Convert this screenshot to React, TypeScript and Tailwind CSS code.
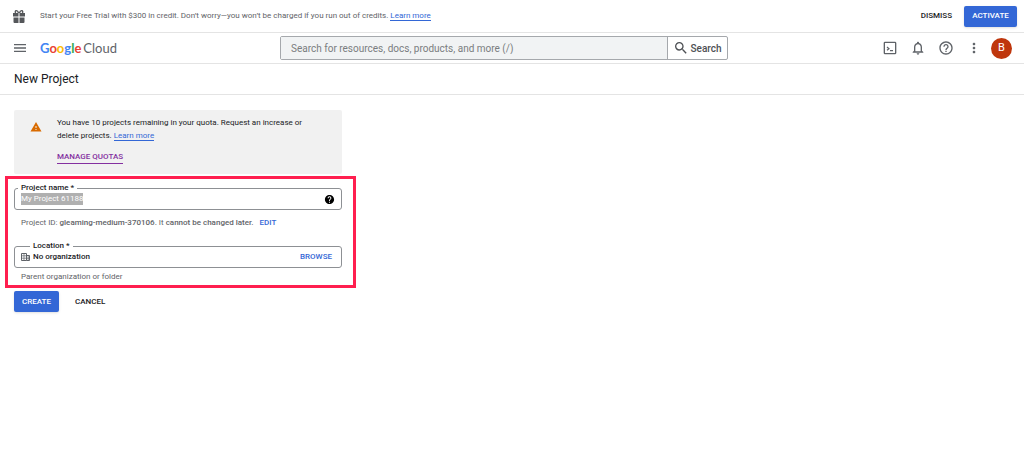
import { useEffect, useRef, useState } from 'react'
import type { ReactNode } from 'react'
import {
  MdHelp,
  MdHelpOutline,
  MdMenu,
  MdMoreVert,
  MdNotificationsNone,
  MdSearch,
  MdWarning
} from 'react-icons/md'

function GiftIcon() {
  return (
    <svg viewBox="0 0 14 14" className="h-[14px] w-[14px]" fill="#55575a" aria-hidden="true">
      <path d="M1 4h5.500v3.500H1zM7.500 4H13v3.500H7.500zM1.500 8.500h5V14h-4a1 1 0 0 1-1-1zM7.500 8.500h5V13a1 1 0 0 1-1 1h-4z" />
      <path
        d="M6.500 4C6 2 5 1.500 4 1.700 3.200 2 3 3 3.700 4M7.500 4C8 2 9 1.500 10 1.700 10.800 2 11 3 10.300 4"
        fill="none"
        stroke="#55575a"
        strokeWidth="1.400"
      />
    </svg>
  )
}

function CloudShellIcon() {
  return (
    <svg viewBox="0 0 24 24" className="h-4 w-4" fill="none" stroke="#5f6368" strokeWidth="2" aria-hidden="true">
      <rect x="3.500" y="3.500" width="17" height="17" rx="1" />
      <path d="M7.500 10.500l3 2.500-3 2.500M12 16h4.500" strokeWidth="1.800" />
    </svg>
  )
}

function OrganizationIcon() {
  return (
    <svg viewBox="0 0 10 10" className="h-[10px] w-[10px]" fill="none" stroke="#5f6368" aria-hidden="true">
      <path d="M.5 1.500h5v7h-5zM5.500 3.500h3v5h-3" />
      <path d="M3 1.500v7M.5 3.800h5M.5 6.200h8M7.200 3.500v5" strokeWidth=".7" />
    </svg>
  )
}

// Google letters are coloured one by one
const LOGO_LETTERS = [
  { letter: 'G', className: 'text-[#4285f4]' },
  { letter: 'o', className: 'text-[#ea4335]' },
  { letter: 'o', className: 'text-[#fbbc04]' },
  { letter: 'g', className: 'text-[#4285f4]' },
  { letter: 'l', className: 'text-[#34a853]' },
  { letter: 'e', className: 'text-[#ea4335]' }
]

function Logo() {
  return (
    <a href="#home" className="flex gap-0.5 font-['Lato',sans-serif] text-[13px] leading-4">
      <span className="font-bold">
        {LOGO_LETTERS.map((item, i) => (
          <span key={i} className={item.className}>{item.letter}</span>
        ))}
      </span>
      <span className="text-[#5f6368]">Cloud</span>
    </a>
  )
}

function TrialBanner() {
  return (
    <div className="flex h-[33px] items-center border-b border-[#e4e4e4] pl-3 pr-[7px]">
      <GiftIcon />
      <p className="ml-[14px] flex-1 text-[8px] text-[#5f6368]">
        Start your Free Trial with $300 in credit. Don’t worry—you won’t be charged if you run out of credits.{' '}
        <a href="#trial" className="border-b border-[#3367d6] text-[#3367d6]">Learn more</a>
      </p>
      <button type="button" className="mr-3 text-[8px] font-medium text-[#202124]">DISMISS</button>
      <button type="button" className="h-[21px] w-[53px] rounded-[2px] bg-[#3367d6] text-[8px] font-medium text-white shadow">
        ACTIVATE
      </button>
    </div>
  )
}

function TopBar() {
  return (
    <header className="flex h-[31px] items-center border-b border-[#e4e4e4] px-3">
      <div className="flex w-[268px] items-center gap-3">
        <button type="button" aria-label="Main menu">
          <MdMenu className="h-4 w-4 text-[#5f6368]" />
        </button>
        <Logo />
      </div>
      <form role="search" className="flex h-6 max-w-[448px] flex-1 rounded-[2px] border border-[#a5a8ac] text-[10px]" onSubmit={(e) => e.preventDefault()}>
        <input
          type="search"
          aria-label="Search"
          placeholder="Search for resources, docs, products, and more (/)"
          className="min-w-0 flex-1 bg-[#f1f3f4] px-[10px] placeholder:text-[#7a7d80]"
        />
        <button type="submit" className="flex w-[60px] items-center justify-center gap-px border-l border-[#a5a8ac] font-medium text-[#4d5054]">
          <MdSearch className="h-4 w-4" />
          Search
        </button>
      </form>
      <div className="ml-auto flex items-center gap-3 text-[#5f6368]">
        <button type="button" aria-label="Cloud Shell"><CloudShellIcon /></button>
        <button type="button" aria-label="Notifications"><MdNotificationsNone className="h-4 w-4" /></button>
        <button type="button" aria-label="Help"><MdHelpOutline className="h-4 w-4" /></button>
        <button type="button" aria-label="More options"><MdMoreVert className="h-4 w-4" /></button>
        <button type="button" className="-ml-[3px] h-[21px] w-[21px] rounded-full bg-[#bf360c] text-[11px] text-white">B</button>
      </div>
    </header>
  )
}

function QuotaNotice() {
  return (
    <div className="ml-[9px] mr-[14px] flex h-16 rounded-[2px] bg-[#f1f1f1] pl-4 pr-6 pt-[6px]">
      <MdWarning className="mt-[5px] h-3 w-3 shrink-0 text-[#d96b00]" />
      <div className="ml-[15px] text-[8px] leading-[13px] text-[#202124]">
        <p>
          You have 10 projects remaining in your quota. Request an increase or delete projects.{' '}
          <a href="#learn" className="border-b border-[#3367d6] text-[#3367d6]">Learn more</a>
        </p>
        <a href="#quotas" className="mt-[9px] inline-block border-b border-[#8430a0] font-medium leading-3 text-[#8430a0]">MANAGE QUOTAS</a>
      </div>
    </div>
  )
}

interface OutlinedFieldProps {
  id: string
  label: string
  labelClassName: string
  children: ReactNode
}

function OutlinedField({ id, label, labelClassName, children }: OutlinedFieldProps) {
  return (
    <div className="relative flex h-[22px] items-center rounded-[3px] border border-[#8d9094] px-[6px]">
      <label htmlFor={id} className={`absolute -top-[6px] bg-white px-[3px] text-[8px] font-medium leading-[10px] text-[#202124] ${labelClassName}`}>
        {label}
      </label>
      {children}
    </div>
  )
}

function ProjectForm() {
  const [name, setName] = useState('My Project 61188')
  const nameRef = useRef<HTMLInputElement>(null)

  // Preselect the generated name so that typing replaces it
  useEffect(() => {
    nameRef.current?.focus()
    nameRef.current?.select()
  }, [])

  return (
    <form onSubmit={(e) => e.preventDefault()}>
      <div className="mt-[2px] h-28 border-[3px] border-[#ff1f4f] pl-[6px] pr-[11px] pt-[9px] text-[8px]">
        <OutlinedField id="project-name" label="Project name *" labelClassName="left-[3px]">
          <input
            id="project-name"
            ref={nameRef}
            value={name}
            onChange={(e) => setName(e.target.value)}
            className="h-3 min-w-0 flex-1 leading-3 text-[#202124] outline-none selection:bg-[#b0b0b0] selection:text-white"
          />
          <button type="button" aria-label="About project names">
            <MdHelp className="h-[11px] w-[11px] text-black" />
          </button>
        </OutlinedField>
        <p className="mt-[6px] pl-[7px] leading-[14px] text-[#5f6368]">
          Project ID: <span className="font-medium">gleaming-medium-370106.</span> It <span className="font-medium">cannot be changed later.</span>
          <button type="button" className="ml-[6px] font-medium text-[#3367d6]">EDIT</button>
        </p>
        <div className="mt-4">
          <OutlinedField id="location" label="Location *" labelClassName="left-[15px]">
            <OrganizationIcon />
            <input id="location" readOnly value="No organization" className="ml-[2px] min-w-0 flex-1 font-medium text-[#202124] outline-none" />
            <button type="button" className="mr-[3px] font-medium text-[#3367d6]">BROWSE</button>
          </OutlinedField>
        </div>
        <p className="mt-[2px] pl-[7px] leading-[14px] text-[#5f6368]">Parent organization or folder</p>
      </div>
      <div className="mt-[3px] flex gap-4 pl-[9px] text-[8px] font-medium">
        <button type="submit" className="h-[21px] w-[45px] rounded-[2px] bg-[#3367d6] text-white shadow">CREATE</button>
        <button type="button" className="text-[#202124]">CANCEL</button>
      </div>
    </form>
  )
}

export default function App() {
  return (
    <div className="min-h-screen bg-white font-['Roboto',sans-serif]">
      <TrialBanner />
      <TopBar />
      <div className="flex h-[31px] items-center border-b border-[#e4e4e4] px-[14px]">
        <h1 className="text-[12px] text-[#202124]">New Project</h1>
      </div>
      <main className="max-w-[356px] pl-[5px] pt-[15px]">
        <QuotaNotice />
        <ProjectForm />
      </main>
    </div>
  )
}
